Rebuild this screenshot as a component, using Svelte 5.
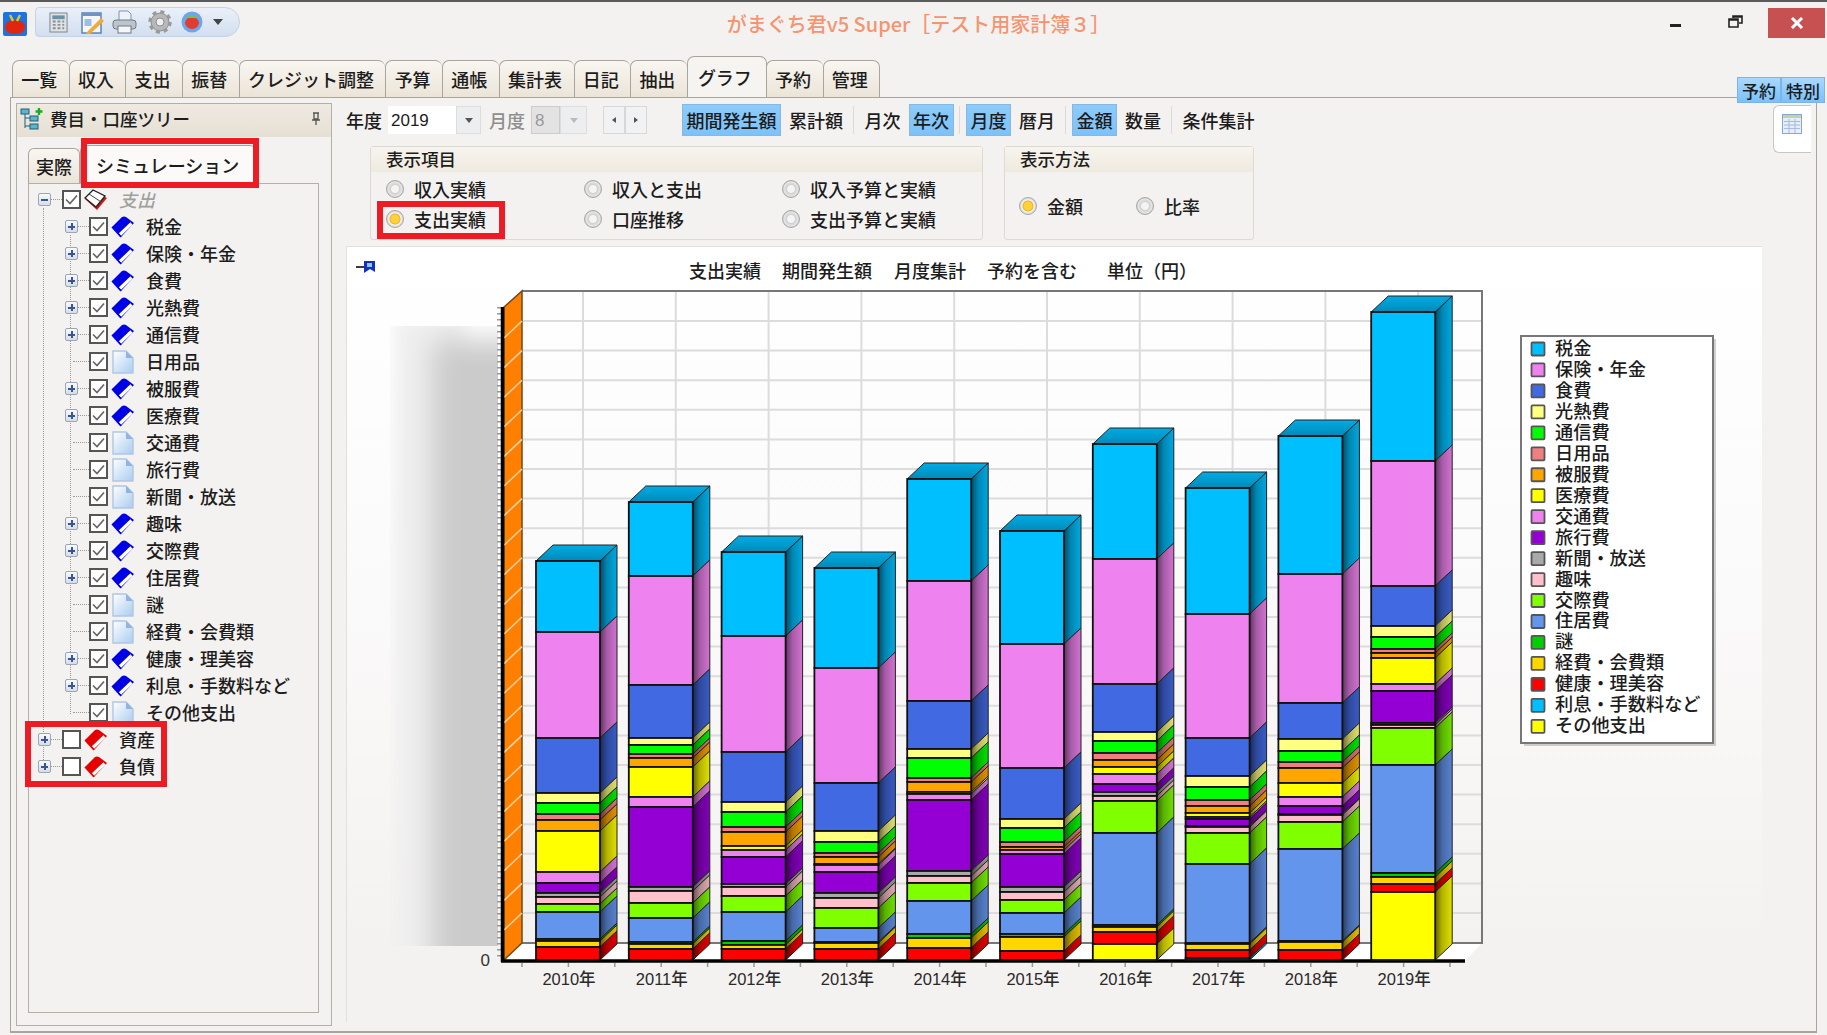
<script>
  const tabs = ['一覧','収入','支出','振替','クレジット調整','予算','通帳','集計表','日記','抽出','グラフ','予約','管理'];
  const tree = [
    ['税金',1],['保険・年金',1],['食費',1],['光熱費',1],['通信費',1],['日用品',0],['被服費',1],['医療費',1],
    ['交通費',0],['旅行費',0],['新聞・放送',0],['趣味',1],['交際費',1],['住居費',1],['謎',0],['経費・会費類',0],
    ['健康・理美容',1],['利息・手数料など',1],['その他支出',0]
  ];
  const cats = [
    ['税金','#00bfff'],['保険・年金','#ee82ee'],['食費','#4169e1'],['光熱費','#ffff80'],['通信費','#00ff00'],
    ['日用品','#f08080'],['被服費','#ffa500'],['医療費','#ffff00'],['交通費','#ee82ee'],['旅行費','#9400d3'],
    ['新聞・放送','#a9a9a9'],['趣味','#ffc0cb'],['交際費','#7fff00'],['住居費','#6495ed'],['謎','#00d000'],
    ['経費・会費類','#ffd700'],['健康・理美容','#ff0000'],['利息・手数料など','#00bfff'],['その他支出','#ffff00']
  ];
  const years = [
    [561,632,738,793,803,814,820,831,872,883,893,897,904,912,939,941,947,960,960,960],
    [502,576,685,738,745,754,758,767,797,807,887,891,903,918,942,944,949,960,960,960],
    [552,636,752,802,812,827,832,846,850,857,884,887,896,912,941,945,949,960,960,960],
    [568,668,783,831,842,853,857,864,865,872,893,898,908,928,942,943,949,960,960,960],
    [479,581,701,749,758,778,782,792,794,800,871,876,883,901,934,938,948,960,960,960],
    [531,644,768,819,828,842,847,850,850,854,887,892,900,913,934,937,951,960,960,960],
    [444,559,684,732,741,753,760,767,774,784,792,796,801,833,925,927,932,944,944,960],
    [488,614,738,776,787,800,806,813,817,819,826,827,833,864,943,944,950,958,960,960],
    [436,574,703,739,751,762,768,783,797,806,814,815,822,849,941,942,950,960,960,960],
    [312,461,586,626,637,649,653,658,684,691,723,725,728,765,873,877,884,892,892,960]
  ];
  const DX = 17, DY = 16, W = 64;
  const bars = years.map((b, i) => ({
    label: (2010 + i) + '年',
    x: 536 + i * 92.8,
    top: b[0],
    color: '#00bfff',
    segs: cats.map((c, j) => ({ color: c[1], y0: b[j], y1: b[j + 1] })).filter(s => s.y1 > s.y0)
  }));
  const hLines = Array.from({ length: 21 }, (_, k) => 913 - k * 29.6);
  const vLines = Array.from({ length: 10 }, (_, k) => 583 + k * 92.8);
  const ticks = Array.from({ length: 21 }, (_, k) => 522 + k * 46.4);
</script>

{#snippet book(color)}
  <svg class="ico" viewBox="0 0 24 22">
    <path d="M1 11 L11 1 Q13 0 15 1 L23 7 L10 21 Z" fill={color}/>
    <path d="M9 18.5 L20.5 7.5" stroke="#fff" stroke-width="3.2"/>
    <path d="M1 11 L10 21" stroke={color} stroke-width="1.5"/>
  </svg>
{/snippet}

{#snippet doc()}
  <svg class="ico docico" viewBox="0 0 24 24">
    <defs><linearGradient id="docg" x1="0" y1="0" x2="1" y2="1"><stop offset="0" stop-color="#fff"/><stop offset="1" stop-color="#a9ccf0"/></linearGradient></defs>
    <path d="M2 1 H15 L22 8 V23 H2 Z" fill="url(#docg)" stroke="#b0c6e2" stroke-width="1.400"/>
    <path d="M15 1 V8 H22 Z" fill="#8fb4e4"/>
  </svg>
{/snippet}

{#snippet check(on)}
  <span class="cb">
    {#if on}<svg viewBox="0 0 15 15"><path d="M2 7.5 L6 11.5 L13 3.5" fill="none" stroke="#666" stroke-width="1.7"/></svg>{/if}
  </span>
{/snippet}

{#snippet radio(on, text)}
  <span class="radio-item"><span class="radio" class:on></span>{text}</span>
{/snippet}

<div class="window">
  <header class="titlebar">
    <div class="qa">
      <svg class="purse" viewBox="0 0 24 24">
        <rect width="24" height="24" rx="2" fill="#1d73e0"/>
        <path d="M2 14 Q3 8 12 8 Q21 8 22 14 Q22 22 12 22 Q2 22 2 14Z" fill="#e0260e"/>
        <path d="M7 3 L10 9 M17 3 L14 9" stroke="#d8d020" stroke-width="2.400"/>
      </svg>
      <div class="pill">
        <svg class="q1" viewBox="0 0 20 22"><rect x="1" y="1" width="18" height="20" fill="#dfe3e6" stroke="#78828c"/><rect x="3.500" y="3.500" width="13" height="4" fill="#6d8fa8"/><path d="M4 10h3M9 10h3M14 10h2M4 13.500h3M9 13.500h3M14 13.500h2M4 17h3M9 17h3M14 17h2" stroke="#8a8f96" stroke-width="2"/></svg>
        <svg class="q2" viewBox="0 0 23 23"><rect x="1" y="2" width="19" height="20" fill="#f3f7fb" stroke="#5f83b0" stroke-width="1.500"/><rect x="1" y="2" width="19" height="3" fill="#6f94c2"/><rect x="3.500" y="8" width="7" height="7" fill="#9bbfe8"/><path d="M6 21 L20 7 L23 10 L9 23 L5 23Z" fill="#f0a93a"/></svg>
        <svg class="q3" viewBox="0 0 25 24"><path d="M7 10 V1 H16 L19 4 V10" fill="#eef3fa" stroke="#7e93ad"/><rect x="1" y="10" width="23" height="9" rx="3" fill="#bcc4cc" stroke="#727b85"/><rect x="6" y="16" width="13" height="7" fill="#f4f6f8" stroke="#727b85"/></svg>
        <svg class="q4" viewBox="0 0 24 24"><circle cx="12" cy="12" r="9" fill="#b8b8b8" stroke="#8e8e8e" stroke-width="1"/><circle cx="12" cy="12" r="10" fill="none" stroke="#9a9a9a" stroke-width="3.500" stroke-dasharray="4 3.850"/><circle cx="12" cy="12" r="4" fill="#eef1f4" stroke="#8e8e8e"/></svg>
        <svg class="q5" viewBox="0 0 22 22"><circle cx="11" cy="11" r="10.500" fill="#6ea6ee"/><ellipse cx="11" cy="12" rx="7" ry="6" fill="#e23c30"/><path d="M6 6h10" stroke="#6ec45c" stroke-width="2"/></svg>
        <span class="caret"></span>
      </div>
    </div>
    <div class="title">がまぐち君v5 Super［テスト用家計簿３］</div>
    <div class="controls">
      <span class="min"></span>
      <svg class="restore" viewBox="0 0 15 13"><path d="M5 3 V1 H14 V8 H11 M1 4 H10 V12 H1 Z M1 5 H10 M5 2 H14" fill="none" stroke="#222" stroke-width="1.600"/></svg>
      <span class="close"><svg viewBox="0 0 14 12"><path d="M2 1 L12 11 M12 1 L2 11" stroke="#fff" stroke-width="3"/></svg></span>
    </div>
  </header>

  <nav class="tabs">
    {#each tabs as t}
      <span class="tab" class:active={t === 'グラフ'}>{t}</span>
    {/each}
  </nav>
  <div class="railtabs"><span>予約</span><span>特別</span></div>

  <div class="body">
    <aside class="side">
      <div class="side-head">
        <svg class="treeico" viewBox="0 0 24 24"><path d="M5 5 V21 M5 11 H11 M5 19 H11" stroke="#1f5f7a" fill="none"/><rect x="1" y="2" width="8" height="5" fill="#5bb6c9" stroke="#1f5f7a"/><rect x="10" y="9" width="8" height="5" fill="#5bb6c9" stroke="#1f5f7a"/><rect x="10" y="17" width="8" height="5" fill="#5bb6c9" stroke="#1f5f7a"/><path d="M19 1 V8 M15.500 4.500 H22.500" stroke="#1fa82a" stroke-width="2.400"/></svg>
        <span class="side-title">費目・口座ツリー</span>
        <svg class="pinv" viewBox="0 0 12 14"><path d="M3 1 H9 M4 1 V7 H8 V1 M2 8 H10 M6 8 V13" stroke="#555" fill="none" stroke-width="1.300"/></svg>
      </div>
      <div class="side-body">
        <div class="stabs"><span class="stab">実際</span><span class="stab sel">シミュレーション</span></div>
        <div class="treebox">
          <i class="vline v0"></i><i class="vline v1"></i>
          <div class="row">
            <span class="exp minus"></span><i class="dash"></i>{@render check(true)}
            <svg class="ico" viewBox="0 0 24 22"><path d="M1 10 L9 2 L23 9 L13 21 Z" fill="#d01818"/><path d="M1 9 L9 1 L21 7 L12 18 Z" fill="#fff" stroke="#222" stroke-width="1.300"/><path d="M5 5 L16.500 12.500" stroke="#444"/></svg>
            <span class="lbl gray">支出</span>
          </div>
          {#each tree as [name, hasKids], i}
            <div class="row lv1">
              {#if hasKids}<span class="exp"></span><i class="dash"></i>{:else}<span class="noexp"></span>{/if}
              {@render check(true)}
              {#if hasKids}{@render book('#0000e6')}{:else}{@render doc()}{/if}
              <span class="lbl">{name}</span>
            </div>
          {/each}
          <div class="row"><span class="exp"></span><i class="dash"></i>{@render check(false)}{@render book('#e60000')}<span class="lbl">資産</span></div>
          <div class="row"><span class="exp"></span><i class="dash"></i>{@render check(false)}{@render book('#e60000')}<span class="lbl">負債</span></div>
        </div>
      </div>
    </aside>

    <main class="main">
      <div class="col">
        <div class="toolbar">
          <span class="t-label">年度</span>
          <span class="input wide">2019</span><span class="drop"><i></i></span>
          <span class="t-label off">月度</span>
          <span class="input off narrow">8</span><span class="drop off"><i></i></span>
          <span class="nav"><span><i class="l"></i></span><span><i class="r"></i></span></span>
          <span class="btn on first">期間発生額</span><span class="btn">累計額</span><i class="sep"></i>
          <span class="btn">月次</span><span class="btn on">年次</span><i class="sep"></i>
          <span class="btn on">月度</span><span class="btn">暦月</span><i class="sep"></i>
          <span class="btn on">金額</span><span class="btn">数量</span><i class="sep"></i>
          <span class="btn">条件集計</span>
        </div>
        <div class="groups">
          <section class="group items">
            <h3>表示項目</h3>
            <div class="radios three">
              {@render radio(false,'収入実績')}{@render radio(false,'収入と支出')}{@render radio(false,'収入予算と実績')}
              {@render radio(true,'支出実績')}{@render radio(false,'口座推移')}{@render radio(false,'支出予算と実績')}
            </div>
          </section>
          <section class="group method">
            <h3>表示方法</h3>
            <div class="radios two">
              {@render radio(true,'金額')}{@render radio(false,'比率')}
            </div>
          </section>
        </div>
        <div class="chart">
          <svg viewBox="346 246 1416 776" width="1416" height="776">
            <defs>
              <linearGradient id="side" x1="0" y1="0" x2="1" y2="0"><stop offset="0" stop-color="#000" stop-opacity=".6"/><stop offset=".4" stop-color="#000" stop-opacity=".3"/><stop offset="1" stop-color="#000" stop-opacity=".12"/></linearGradient>
              <linearGradient id="topf" x1="0" y1="0" x2="0" y2="1"><stop offset="0" stop-color="#000" stop-opacity=".1"/><stop offset="1" stop-color="#000" stop-opacity=".28"/></linearGradient>
              <filter id="blur" x="-60%" y="-10%" width="220%" height="120%"><feGaussianBlur stdDeviation="14"/></filter>
              <filter id="blur2" x="-60%" y="-10%" width="220%" height="120%"><feGaussianBlur stdDeviation="8"/></filter>
              <clipPath id="blurclip"><rect x="390" y="326" width="108" height="620"/></clipPath>
            </defs>
            <g clip-path="url(#blurclip)">
              <rect x="395" y="318" width="70" height="660" fill="#f0efef" filter="url(#blur2)"/>
              <rect x="432" y="340" width="100" height="660" fill="#cbcbcb" filter="url(#blur)"/>
            </g>

            {#each hLines as y}<line x1="522" x2="1482" y1={y} y2={y} class="grid"/>{/each}
            {#each vLines as x}<line x1={x} x2={x} y1="292" y2="943" class="grid"/>{/each}

            <polygon points="522,943 1482,943 1465,961 503,961" fill="#fff"/>
            <path d="M522 291 H1482 V943 H522" fill="none" stroke="#777" stroke-width="2"/>
            <polygon points="504,307 522,291 522,943 504,960" fill="#ff8000" stroke="#6e4a18" stroke-width="1.500"/>
            {#each hLines as y}<line x1="504" x2="522" y1={y + 17} y2={y} stroke="#f3d2a6" stroke-width="1.500"/>{/each}
            <line x1="499" x2="499" y1="307" y2="961" class="ytick"/>
            <line x1="502.500" x2="502.500" y1="307" y2="962" stroke="#000" stroke-width="3.500"/>
            <line x1="501" x2="1465" y1="961" y2="961" stroke="#000" stroke-width="3.500"/>
            {#each ticks as x}<line x1={x} x2={x} y1="963" y2="967" stroke="#999" stroke-width="1.500"/>{/each}
            <text x="490" y="966" class="zero">0</text>

            {#each bars as bar}
              {#each bar.segs as s}
                <polygon points="{bar.x + W},{s.y0} {bar.x + W + DX},{s.y0 - DY} {bar.x + W + DX},{s.y1 - DY} {bar.x + W},{s.y1}" fill={s.color}/>
                <polygon points="{bar.x + W},{s.y0} {bar.x + W + DX},{s.y0 - DY} {bar.x + W + DX},{s.y1 - DY} {bar.x + W},{s.y1}" fill="url(#side)" stroke="#222" stroke-width="1"/>
              {/each}
              <polygon points="{bar.x},{bar.top} {bar.x + DX},{bar.top - DY} {bar.x + W + DX},{bar.top - DY} {bar.x + W},{bar.top}" fill={bar.color}/>
              <polygon points="{bar.x},{bar.top} {bar.x + DX},{bar.top - DY} {bar.x + W + DX},{bar.top - DY} {bar.x + W},{bar.top}" fill="url(#topf)" stroke="#222" stroke-width="1"/>
              {#each bar.segs as s}
                <rect x={bar.x} y={s.y0} width={W} height={s.y1 - s.y0} fill={s.color} stroke="#111" stroke-width="1.800"/>
              {/each}
              <text x={bar.x + W / 2 + 1} y="985" class="year">{bar.label}</text>
            {/each}

            <g class="ctitle">
              <text x="689" y="278">支出実績</text>
              <text x="782" y="278">期間発生額</text>
              <text x="894" y="278">月度集計</text>
              <text x="987" y="278">予約を含む</text>
              <text x="1107" y="278">単位（円）</text>
            </g>
            <g class="chartpin">
              <path d="M356 267 H364" stroke="#223" stroke-width="1.800"/>
              <path d="M364 261 L375 261 L375 272 L370 269 L364 273 Z" fill="#1030c8"/>
              <path d="M367 263 H372 V267 H367 Z" fill="#8fc8f0"/>
            </g>

            <rect x="1524" y="339" width="192" height="407" fill="#999" opacity=".45"/>
            <rect x="1521" y="336" width="192" height="407" fill="#fff" stroke="#777" stroke-width="2"/>
            {#each cats as c, i}
              <rect x="1531.500" y={342.500 + i * 20.960} width="13" height="13" fill={c[1]} stroke="#555" stroke-width="1.800" rx="1"/>
              <text x="1555" y={355 + i * 20.960} class="leg">{c[0]}</text>
            {/each}
          </svg>
        </div>
      </div>
      <div class="rail">
        <div class="railtab">
          <svg viewBox="0 0 20 20"><rect x=".5" y=".5" width="19" height="19" fill="#e6eef9" stroke="#8aa5d0"/><rect x="1" y="1" width="18" height="3" fill="#bcd5a8"/><path d="M2 7.500H18M2 11H18M2 14.500H18M7 5V19M13 5V19" stroke="#a4bcdf"/></svg>
        </div>
      </div>
    </main>
  </div>

  <i class="mark m1"></i><i class="mark m2"></i><i class="mark m3"></i>
</div>

<style>
  :global(body) { margin: 0; background: #f4f2f0; }
  .window {
    position: relative; width: 1827px; height: 1035px; box-sizing: border-box; overflow: hidden;
    border-top: 2px solid #5a5a5a; background: #f4f2f0; color: #1c1c1c;
    font-family: "Noto Sans CJK JP", "Noto Sans", sans-serif; font-size: 18px; line-height: 1; font-weight: 500;
  }
  .titlebar { display: grid; grid-template-columns: 240px 1fr 237px; height: 54px; }
  .qa { display: flex; padding: 5px 0 0 3px; height: 32px; }
  .purse { width: 24px; height: 24px; margin-top: 5px; }
  .pill {
    display: flex; align-items: center; width: 205px; height: 30px; margin-left: 8px; box-sizing: border-box; padding-left: 13px;
    background: linear-gradient(#eaf0f8, #d2dff0); border: 1px solid #c3d3e8; border-radius: 4px 16px 16px 4px;
  }
  .q1 { width: 19px; height: 21px; }
  .q2 { width: 23px; height: 23px; margin-left: 13px; }
  .q3 { width: 25px; height: 24px; margin-left: 8px; }
  .q4 { width: 24px; height: 24px; margin-left: 11px; }
  .q5 { width: 22px; height: 22px; margin-left: 9px; }
  .caret { margin-left: 10px; border: 5px solid transparent; border-top: 6px solid #444; border-bottom: 0; }
  .title { text-align: center; color: #f59570; font-size: 20px; padding: 12px 0 0 7px; }
  .controls { display: flex; align-items: flex-start; }
  .min { width: 11px; height: 3px; background: #222; margin: 22px 0 0 80px; }
  .restore { width: 15px; height: 13px; margin: 13px 0 0 47px; }
  .close {
    display: flex; align-items: center; justify-content: center; width: 57px; height: 30px; margin: 6px 0 0 25px; background: #c75050;
  }
  .close svg { width: 14px; height: 12px; }

  .tabs { display: flex; align-items: flex-end; height: 41px; padding-left: 12px; box-sizing: border-box; }
  .tab {
    display: flex; align-items: center; height: 37px; box-sizing: border-box; padding: 0 11.500px 0 8.200px;
    background: linear-gradient(#f9f6f1, #ebe4d8); border: 1px solid #aaa59c; border-bottom: 0; border-right-width: 0;
    border-radius: 7px 7px 0 0;
  }
  .tab:last-child { border-right-width: 1px; }
  .tab.active { height: 41px; background: #f6f4f1; padding: 0 14px 0 10px; border-right-width: 1px; margin-right: -1px; position: relative; z-index: 1; }
  .railtabs { position: absolute; top: 75px; left: 1737px; display: flex; z-index: 2; }
  .railtabs span {
    width: 44px; height: 26px; display: flex; align-items: center; justify-content: center; box-sizing: border-box; font-size: 17px;
    background: linear-gradient(#a9d8ff, #79c1fb); border: 1px solid #7db3e6;
  }

  .body {
    display: flex; height: 936px; box-sizing: border-box; margin: 0 10px 0 10px; padding: 5px 0 5px 5px;
    border: 1px solid #aaa59c; border-bottom-width: 2px;
  }
  .side { width: 316px; box-sizing: border-box; border: 1px solid #b4b0a8; display: flex; flex-direction: column; flex: none; }
  .side-head { display: flex; align-items: center; height: 33px; box-sizing: border-box; padding: 0 0 4px 3px; background: linear-gradient(#efeae2, #e6dfd3); }
  .treeico { width: 24px; height: 24px; }
  .side-title { margin-left: 6px; flex: 1; font-size: 17.500px; }
  .pinv { width: 12px; height: 14px; margin-right: 9px; }
  .side-body { flex: 1; padding: 10px 12px 12px 11px; display: flex; flex-direction: column; }
  .stabs { display: flex; height: 36px; align-items: flex-end; }
  .stab {
    display: flex; align-items: center; height: 35px; padding: 0 7px; box-sizing: border-box;
    background: linear-gradient(#f9f6f1, #ebe4d8); border: 1px solid #aaa59c; border-bottom: 0; border-radius: 6px 6px 0 0;
  }
  .stab.sel { background: #fbfaf8; padding: 0 16px 0 15px; height: 38px; }
  .treebox { position: relative; flex: 1; border: 1px solid #b4b0a8; padding-top: 2px; }
  .row { display: flex; align-items: center; height: 27px; padding-left: 9px; position: relative; z-index: 1; }
  .row.lv1 { padding-left: 36px; }
  .exp {
    position: relative; width: 13px; height: 13px; box-sizing: border-box; flex: none; background: linear-gradient(#f8fafc, #d6dde6);
    border: 1px solid #9aa6b6; border-radius: 2px;
  }
  .exp::before { content: ""; position: absolute; left: 2px; right: 2px; top: 4.500px; height: 2px; background: #3b5590; }
  .exp::after { content: ""; position: absolute; top: 2px; bottom: 2px; left: 4.500px; width: 2px; background: #3b5590; }
  .exp.minus::after { display: none; }
  .dash { width: 11px; height: 0; flex: none; border-top: 1px dotted #999; }
  .noexp { width: 16px; margin-left: 8px; flex: none; border-top: 1px dotted #999; height: 0; }
  .cb {
    display: flex; align-items: center; justify-content: center; width: 19px; height: 19px; box-sizing: border-box; flex: none;
    background: #fff; border: 2px solid #555;
  }
  .cb svg { width: 15px; height: 15px; }
  .ico { width: 24px; height: 22px; margin-left: 3px; flex: none; }
  .docico { height: 24px; }
  .lbl { margin: 0 0 2px 11px; white-space: nowrap; }
  .lbl.gray { color: #a0a0a0; font-style: italic; }
  .vline { position: absolute; width: 0; border-left: 1px dotted #999; }
  .v0 { left: 14px; top: 24px; height: 558px; }
  .v1 { left: 41px; top: 51px; height: 479px; }

  .main { flex: 1; display: flex; min-width: 0; }
  .col { width: 1430px; padding-left: 14px; box-sizing: border-box; }
  .toolbar { display: flex; align-items: center; height: 32px; padding-top: 1px; box-sizing: content-box; }
  .t-label { width: 36px; }
  .t-label.off { color: #8e8e8e; margin-left: 8px; }
  .input {
    display: flex; align-items: center; height: 28px; box-sizing: border-box; padding-left: 3px; margin-left: 6px; background: #fff; font-size: 17px;
    font-family: "Liberation Sans", sans-serif;
  }
  .input.wide { width: 68px; }
  .input.narrow { width: 29px; }
  .input.off { background: #e3e3e3; color: #999; border: 1px solid #ccc; }
  .drop {
    display: flex; align-items: center; justify-content: center; width: 25px; height: 28px; box-sizing: border-box;
    background: #eceef0; border: 1px solid #ddd;
  }
  .drop i { border: 4px solid transparent; border-top: 5px solid #555; border-bottom: 0; }
  .drop.off { width: 27px; }
  .drop.off i { border-top-color: #bbb; }
  .nav { display: flex; height: 28px; margin-left: 16px; width: 44px; margin-right: 35px; }
  .nav span { flex: 1; display: flex; align-items: center; justify-content: center; background: #f1f2f3; border: 1px solid #d8d8d8; }
  .nav i { border: 3.500px solid transparent; }
  .nav i.l { border-right: 4px solid #555; border-left: 0; }
  .nav i.r { border-left: 4px solid #555; border-right: 0; }
  .btn {
    display: flex; align-items: center; height: 32px; padding: 0 3.500px; box-sizing: border-box; margin-right: 3.500px; border: 1px solid transparent;
  }
  .btn.on { background: linear-gradient(#8ccbfb, #7cc2f9); border-color: #88b8e0; }
  .sep { width: 1px; height: 28px; background: #dcdad6; margin: 0 6px 0 2px; }

  .groups { display: flex; gap: 21px; margin: 10px 0 0 24px; }
  .group { height: 94px; border: 1px solid #dedad2; border-radius: 3px; box-sizing: border-box; display: flex; flex-direction: column; background: #f4f2f0; }
  .group h3 {
    margin: 0; height: 25px; flex: none; box-sizing: border-box; display: flex; align-items: center; font-weight: 500; font-size: 17.500px; padding: 0 0 2px 15px;
    background: linear-gradient(#f7f4ef, #efeadf);
  }
  .items { width: 613px; }
  .method { width: 250px; }
  .radios { flex: 1; display: grid; align-items: center; }
  .three { grid-template-columns: repeat(3, 198px); grid-auto-rows: 30px; padding: 0 0 3px 15px; align-content: center; }
  .two { grid-template-columns: repeat(2, 117px); padding-left: 14px; }
  .radio-item { display: flex; align-items: center; gap: 10px; }
  .radio {
    width: 18px; height: 18px; border-radius: 50%; box-sizing: border-box; flex: none; border: 1px solid #a8a8a8;
    background: radial-gradient(circle at 50% 50%, #f4f4f4 0 3.500px, #d0d0d0 4.500px, #e6e6e6 7px, #bbb 9px);
  }
  .radio.on { background: radial-gradient(circle at 50% 50%, #ffd23a 0 4px, #f0b020 5px, #f4f4f4 6px, #c8c8c8 9px); }

  .chart {
    width: 1416px; height: 776px; margin-top: 6px; box-sizing: border-box;
    background: linear-gradient(#fff 0, #fbfafa 45%, #f4f2f0 90%);
    box-shadow: inset 1px 1px 0 #e2e0dc;
  }
  .chart svg { display: block; }
  .grid { stroke: #dcdcdc; stroke-width: 2; }
  .ytick { stroke: #999; stroke-width: 4; stroke-dasharray: 1.500 4.500; }
  .year { font-family: "Liberation Sans", "Noto Sans CJK JP", sans-serif; font-size: 16.500px; text-anchor: middle; fill: #2a2a2a; }
  .zero { font-family: "Liberation Sans", sans-serif; font-size: 17px; text-anchor: end; fill: #333; }
  .ctitle text { font-size: 18px; fill: #1c1c1c; }
  .leg { font-size: 18.200px; fill: #1c1c1c; }

  .rail { flex: 1; padding: 2px 0 0 11px; }
  .railtab {
    width: 38px; height: 48px; box-sizing: border-box; padding: 8px 0 0 8px; background: #fff; border: 1px solid #c8c6c2; border-right: 0; border-radius: 6px 0 0 6px;
  }
  .railtab svg { width: 20px; height: 20px; display: block; }

  .mark { position: absolute; box-sizing: border-box; border: 6px solid #ed1c24; z-index: 5; }
  .m1 { left: 81px; top: 136px; width: 178px; height: 50px; }
  .m2 { left: 377px; top: 199px; width: 128px; height: 38px; }
  .m3 { left: 25px; top: 719px; width: 142px; height: 66px; }
</style>
